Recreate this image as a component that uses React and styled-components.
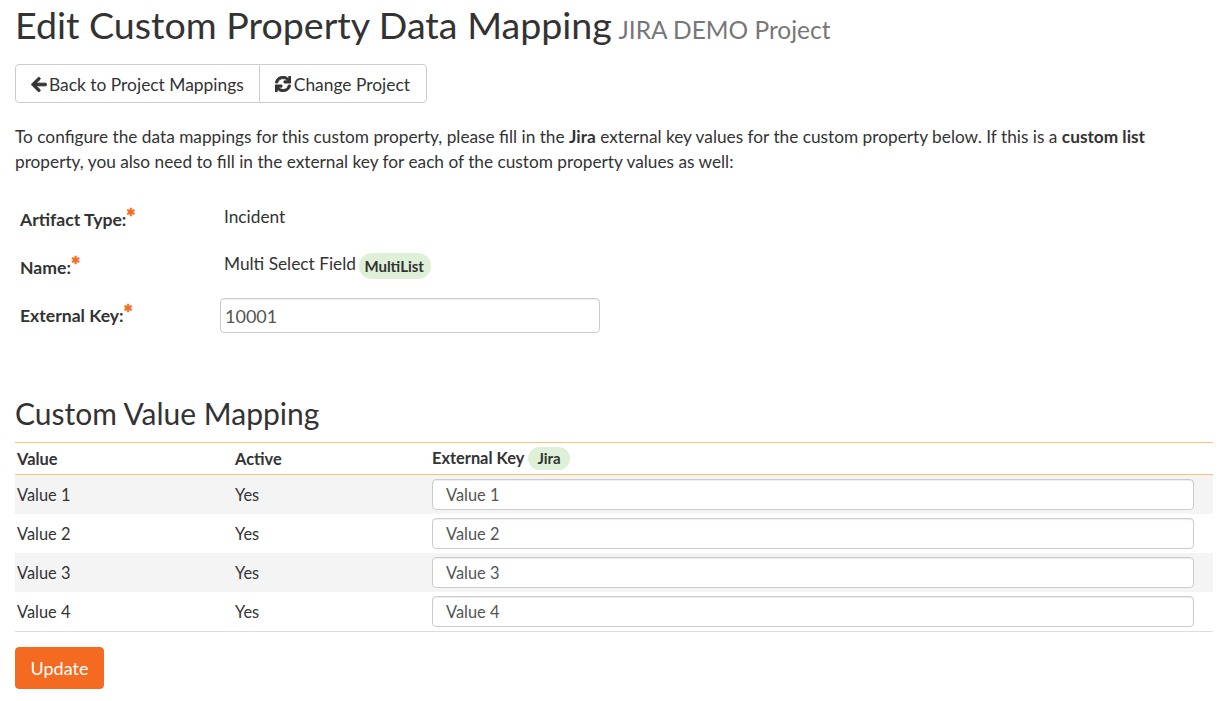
import React from 'react';
import styled, { createGlobalStyle } from 'styled-components';
import { FaArrowLeft, FaSync } from 'react-icons/fa';

const rows = ['Value 1', 'Value 2', 'Value 3', 'Value 4'];

export default function App() {
    return (
        <>
            <Global />
            <Page>
                <Title>Edit Custom Property Data Mapping <small>JIRA DEMO Project</small></Title>
                <BtnGroup>
                    <GroupBtn><BackIcon />Back to Project Mappings</GroupBtn>
                    <GroupBtn><SyncIcon />Change Project</GroupBtn>
                </BtnGroup>
                <Intro>
                    To configure the data mappings for this custom property, please fill in the <b>Jira</b> external key values for the custom property below. If this is a <b>custom list</b> property, you also need to fill in the external key for each of the custom property values as well:
                </Intro>
                <Form>
                    <Label>Artifact Type:<Star>*</Star></Label>
                    <Value>Incident</Value>
                    <Label>Name:<Star>*</Star></Label>
                    <Value $raised>Multi Select Field <Badge>MultiList</Badge></Value>
                    <Label>External Key:<Star>*</Star></Label>
                    <KeyInput defaultValue="10001" />
                </Form>
                <SubTitle>Custom Value Mapping</SubTitle>
                <Table>
                    <thead>
                        <tr>
                            <Th $w={218}>Value</Th>
                            <Th $w={197}>Active</Th>
                            <Th>External Key <Badge $small>Jira</Badge></Th>
                        </tr>
                    </thead>
                    <tbody>
                        {rows.map((r) => (
                            <Row key={r}>
                                <Td>{r}</Td>
                                <Td>Yes</Td>
                                <Td><CellInput defaultValue={r} /></Td>
                            </Row>
                        ))}
                    </tbody>
                </Table>
                <Update>Update</Update>
            </Page>
        </>
    );
}

const Global = createGlobalStyle`
    html, body { margin: 0; background: #fff; }
    body { font-family: Lato, sans-serif; color: #333; }
    * { box-sizing: border-box; }
`;

const Page = styled.div`
    padding: 0 10px 0 15px;
`;

const Title = styled.h1`
    margin: 0;
    padding-top: 3px;
    font-size: 37.6px;
    line-height: 44px;
    font-weight: 400;
    small {
        margin-left: -3px;
        font-size: 24.5px;
        color: #777;
    }
`;

const BtnGroup = styled.div`
    display: inline-flex;
    margin-top: 12px;
    vertical-align: top;
`;

const GroupBtn = styled.button`
    display: flex;
    align-items: center;
    gap: 2px;
    height: 39px;
    padding: 1px 15px 0;
    font: 400 17.4px Lato, sans-serif;
    color: #333;
    background: #fff;
    border: 1px solid #ccc;
    &:first-child { border-radius: 4px 0 0 4px; }
    &:last-child { border-radius: 0 4px 4px 0; margin-left: -1px; padding-right: 16px; }
`;

const BackIcon = styled(FaArrowLeft)`
    width: 16px;
    height: 17px;
    stroke: currentColor;
    stroke-width: 30;
`;

const SyncIcon = styled(FaSync)`
    width: 16px;
    height: 16px;
    margin-right: 1px;
    stroke: currentColor;
    stroke-width: 30;
`;

const Intro = styled.p`
    margin: 21px 0 0;
    font-size: 17.25px;
    line-height: 25px;
    b { font-weight: 700; }
`;

const Form = styled.div`
    display: grid;
    grid-template-columns: 200px 380px;
    grid-auto-rows: 48px;
    margin-top: 25px;
    padding-left: 5px;
    align-items: start;
`;

const Label = styled.label`
    font-size: 17.6px;
    font-weight: 700;
    line-height: 24px;
    padding-top: 9px;
`;

const Star = styled.span`
    color: #f46a21;
    font-size: 22px;
    font-weight: 900;
    line-height: 0;
    position: relative;
    top: -1px;
    -webkit-text-stroke: 0.6px #f46a21;
`;

const Value = styled.div`
    font-size: 17.3px;
    line-height: 24px;
    padding: ${(p) => (p.$raised ? '5px' : '6px')} 0 0 4px;
`;

const Badge = styled.span`
    display: inline-block;
    background: #dff0d8;
    border-radius: 13px;
    font-weight: 700;
    font-size: 15px;
    line-height: ${(p) => (p.$small ? '23px' : '26px')};
    padding: ${(p) => (p.$small ? '0 9.5px' : '0 7px 0 5px')};
    margin: ${(p) => (p.$small ? '0' : '-4px 0 -4px -1px')};
    vertical-align: ${(p) => (p.$small ? 'baseline' : 'middle')};
`;

const KeyInput = styled.input`
    width: 380px;
    height: 35px;
    margin-top: 3px;
    padding: 0 4px;
    font: 400 18px Lato, sans-serif;
    color: #555;
    border: 1px solid #ccc;
    border-radius: 4px;
    box-shadow: inset 0 1px 1px rgba(0,0,0,.075);
`;

const SubTitle = styled.h2`
    margin: 51px 0 0;
    font-size: 30px;
    line-height: 38px;
    font-weight: 400;
`;

const Table = styled.table`
    width: 1198px;
    margin-top: 10px;
    border-collapse: collapse;
    border-bottom: 1px solid #ddd;
`;

const Th = styled.th`
    width: ${(p) => (p.$w ? p.$w + 'px' : 'auto')};
    height: 32px;
    padding: 0 2px;
    text-align: left;
    font-size: 16.4px;
    font-weight: 700;
    border-top: 1px solid #fbc36d;
    border-bottom: 1px solid #fbc36d;
`;

const Row = styled.tr`
    height: 39px;
    &:nth-child(odd) { background: #f4f4f4; }
    &:last-child { height: 40px; }
    &:last-child td { padding-top: 1px; }
`;

const Td = styled.td`
    padding: 0 2px;
    font-size: 16.4px;
`;

const CellInput = styled.input`
    display: block;
    width: 762px;
    height: 31px;
    padding: 0 13px;
    font: 400 16.4px Lato, sans-serif;
    color: #555;
    background: #fff;
    border: 1px solid #ccc;
    border-radius: 4px;
    box-shadow: inset 0 1px 1px rgba(0,0,0,.075);
`;

const Update = styled.button`
    display: block;
    width: 89px;
    height: 42px;
    margin-top: 15px;
    font: 400 18px Lato, sans-serif;
    color: #fff;
    background: #f46a21;
    border: 1px solid #f46a21;
    border-radius: 4px;
`;
